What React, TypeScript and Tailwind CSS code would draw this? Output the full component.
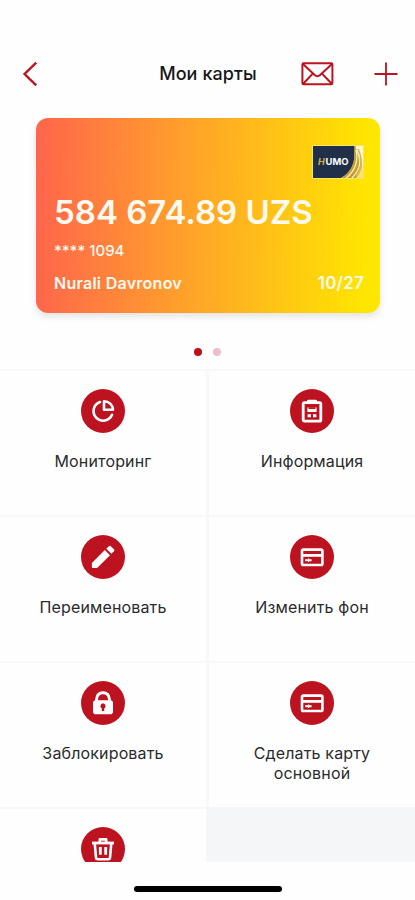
import type { ReactNode } from "react";

function PieIcon() {
  return (
    <svg width="24" height="24" viewBox="0 0 24 24" fill="none" stroke="#fff" strokeWidth="2.6">
      <path d="M9 3A9.6 9.6 0 1 0 21 15.8" strokeLinecap="round" />
      <path d="M13 2.2V10.8H22A8.8 8.8 0 0 0 13 2.2Z" strokeLinejoin="round" />
    </svg>
  );
}

function ClipboardIcon() {
  return (
    <svg width="24" height="24" viewBox="0 0 24 24" fill="none">
      <rect x="3.2" y="3.6" width="17.6" height="18.6" rx="1.2" stroke="#fff" strokeWidth="2.8" />
      <rect x="7" y="0.8" width="10" height="4" rx="1.3" fill="#fff" />
      <path d="M7.4 8.6H16.6V13H7.4ZM7.6 15.2H11V18.2H7.6ZM13 15.2H16.4V18.2H13Z" fill="#fff" />
      <path d="M8.6 8.2H15.4V10H8.6Z" fill="#bd121f" />
    </svg>
  );
}

function PencilIcon() {
  return (
    <svg width="24" height="24" viewBox="0 0 24 24" fill="#fff">
      <path d="M.9 17.9 13.8 5 19 10.2 6.1 23.1H2.1Q.9 23.1 .9 21.9Z" />
      <path d="M15.3 3.7 17.8 1.2Q18.8 .4 19.8 1.2L22.9 4.3Q23.7 5.3 22.9 6.3L20.4 8.8Z" />
    </svg>
  );
}

function BankCardIcon() {
  return (
    <svg width="24" height="24" viewBox="0 0 24 24" fill="none">
      <rect x="2" y="4.6" width="20.4" height="15.4" rx="1.3" stroke="#fff" strokeWidth="2.6" />
      <path d="M2.5 10.4H22" stroke="#fff" strokeWidth="2.8" />
      <path d="M5.2 15.2H11.6" stroke="#fff" strokeWidth="2" />
      <path d="M8.6 13.4V17" stroke="#fff" strokeWidth="1.2" />
    </svg>
  );
}

function LockIcon() {
  return (
    <svg width="24" height="24" viewBox="0 0 24 24">
      <path d="M5.6 11V8Q6.2 1.8 12 1.8T18.4 8V11" fill="none" stroke="#fff" strokeWidth="2.9" />
      <rect x="2" y="9.2" width="20" height="14" rx="2.8" fill="#fff" />
      <path d="M12 12.3A2.8 2.8 0 0 0 10.8 17.5V20H13.2V17.5A2.8 2.8 0 0 0 12 12.3Z" fill="#bd121f" />
    </svg>
  );
}

function TrashIcon() {
  return (
    <svg width="24" height="24" viewBox="0 0 24 24" fill="none" stroke="#fff">
      <path d="M1 6H23" strokeWidth="2.8" />
      <path d="M8.8 5V2.4H15.2V5M3.7 6 5 20.8Q5.2 22.3 6.6 22.3H17.4Q18.8 22.3 19 20.8L20.3 6" strokeWidth="2.6" strokeLinejoin="round" />
      <path d="M9.3 10V17.8M14.7 10V17.8" strokeWidth="2.8" />
    </svg>
  );
}

function Tile({ icon, children }: { icon: ReactNode; children?: ReactNode }) {
  return (
    <div className="flex flex-col items-center overflow-hidden bg-[#fefefe] pt-[18px]">
      <div className="flex h-11 w-11 shrink-0 items-center justify-center rounded-full bg-[#bd121f]">{icon}</div>
      <p className="mt-[18px] text-center text-[16px] leading-5 tracking-[0.15px] text-[#2b2b2b]">{children}</p>
    </div>
  );
}

function HumoLogo() {
  return (
    <svg width="52" height="34" viewBox="0 0 52 34">
      <rect width="52" height="34" rx="1" fill="#f6e36a" />
      <path d="M1 1H42.5V9C42.5 20 38 28 29 33H1Z" fill="#203049" />
      <path d="M42.5 1V9C42.5 20 38 28 29 33H44C50 26 51 18 48 12Q45 7 44 1Z" fill="#c59d36" />
      <path d="M44 5C47 17 42 27 34 33M46 8C50 18 46 27 40 33" fill="none" stroke="#fbefb0" strokeWidth="1.3" />
      <path d="M43.5 1H51V23C50 14 45 10 43.5 1Z" fill="#fff8d3" />
      <path d="M46 4C50 12 51 24 44 31" fill="none" stroke="#d9b84c" strokeWidth="1.6" />
      <text x="6" y="19.5" fontFamily="Inter, sans-serif" fontSize="9" fontWeight="700" fontStyle="italic" fill="#d2b13b">H</text>
      <text x="13.5" y="19.5" fontFamily="Inter, sans-serif" fontSize="9" fontWeight="700" textLength="23" lengthAdjust="spacingAndGlyphs" fill="#fff">UMO</text>
    </svg>
  );
}

export default function App() {
  return (
    <main className="flex h-[900px] w-[415px] flex-col overflow-hidden bg-[#fefefe] font-['Inter','Noto_Sans',sans-serif]">
      <header className="mt-[50px] grid h-12 shrink-0 grid-cols-[159px_98px_1fr] items-center">
        <button className="pl-[22px]" aria-label="Назад">
          <svg width="16" height="26" viewBox="0 0 16 26" fill="none" stroke="#bd121f" strokeWidth="2.4">
            <path d="M14.2 1.7 2.6 13 14.2 24.3" />
          </svg>
        </button>
        <h1 className="whitespace-nowrap text-center text-[18px] font-medium leading-6 tracking-[0.1px] text-[#171717]">Мои карты</h1>
        <div className="flex items-center gap-10 pl-[44px]">
          <svg width="33" height="24" viewBox="0 0 33 24" fill="none" stroke="#bd121f" strokeWidth="2">
            <rect x="1.4" y="1.3" width="30" height="21" rx="1.2" />
            <path d="M2 2 13.7 13Q16.4 15.4 19.1 13L31 2M2 22 12 11.4M31 22 20.8 11.4" />
          </svg>
          <svg width="24" height="24" viewBox="0 0 24 24" fill="none" stroke="#bd121f" strokeWidth="1.8">
            <path d="M12 .5V23.5M.5 12H23.5" />
          </svg>
        </div>
      </header>

      <section className="ml-9 mt-5 flex h-[195px] w-[344px] shrink-0 flex-col rounded-xl bg-[linear-gradient(91deg,#ff654c_0%,#ffa727_48%,#ffe600_96%)] pl-[18px] pr-4 text-[#fffaf0] shadow-[0_4px_7px_rgba(0,0,0,0.1)]">
        <div className="mt-[27px] flex h-[34px] justify-end"><HumoLogo /></div>
        <p className="mt-[13px] whitespace-nowrap text-[33px] font-semibold leading-10">584 674.89 UZS</p>
        <p className="mt-[9px] text-[15px] font-medium leading-5">**** 1094</p>
        <div className="mt-3 flex justify-between text-[16px] font-semibold leading-5">
          <span className="tracking-[0.27px]">Nurali Davronov</span>
          <span className="text-[17px] tracking-[0.2px]">10/27</span>
        </div>
      </section>

      <div className="mt-[35px] flex h-2 shrink-0 justify-center gap-[11px]">
        <i className="h-2 w-2 rounded-full bg-[#c20d1a]" />
        <i className="h-2 w-2 rounded-full bg-[#efbdc5]" />
      </div>

      <section className="mt-[13px] grid h-[493px] shrink-0 grid-cols-[206px_206px] grid-rows-[144px_144px_144px_54px] gap-x-[3px] gap-y-[2px] overflow-hidden bg-[#f8f8f9] pt-[2px]">
        <Tile icon={<PieIcon />}>Мониторинг</Tile>
        <Tile icon={<ClipboardIcon />}>Информация</Tile>
        <Tile icon={<PencilIcon />}>Переименовать</Tile>
        <Tile icon={<BankCardIcon />}>Изменить фон</Tile>
        <Tile icon={<LockIcon />}>Заблокировать</Tile>
        <Tile icon={<BankCardIcon />}>Сделать карту<br />основной</Tile>
        <Tile icon={<TrashIcon />} />
        <div className="-ml-[2px] -mt-[2px] bg-[#f4f6f8]" />
      </section>

      <div className="mt-6 h-[6px] w-[148px] shrink-0 self-center rounded-full bg-black" />
    </main>
  );
}
